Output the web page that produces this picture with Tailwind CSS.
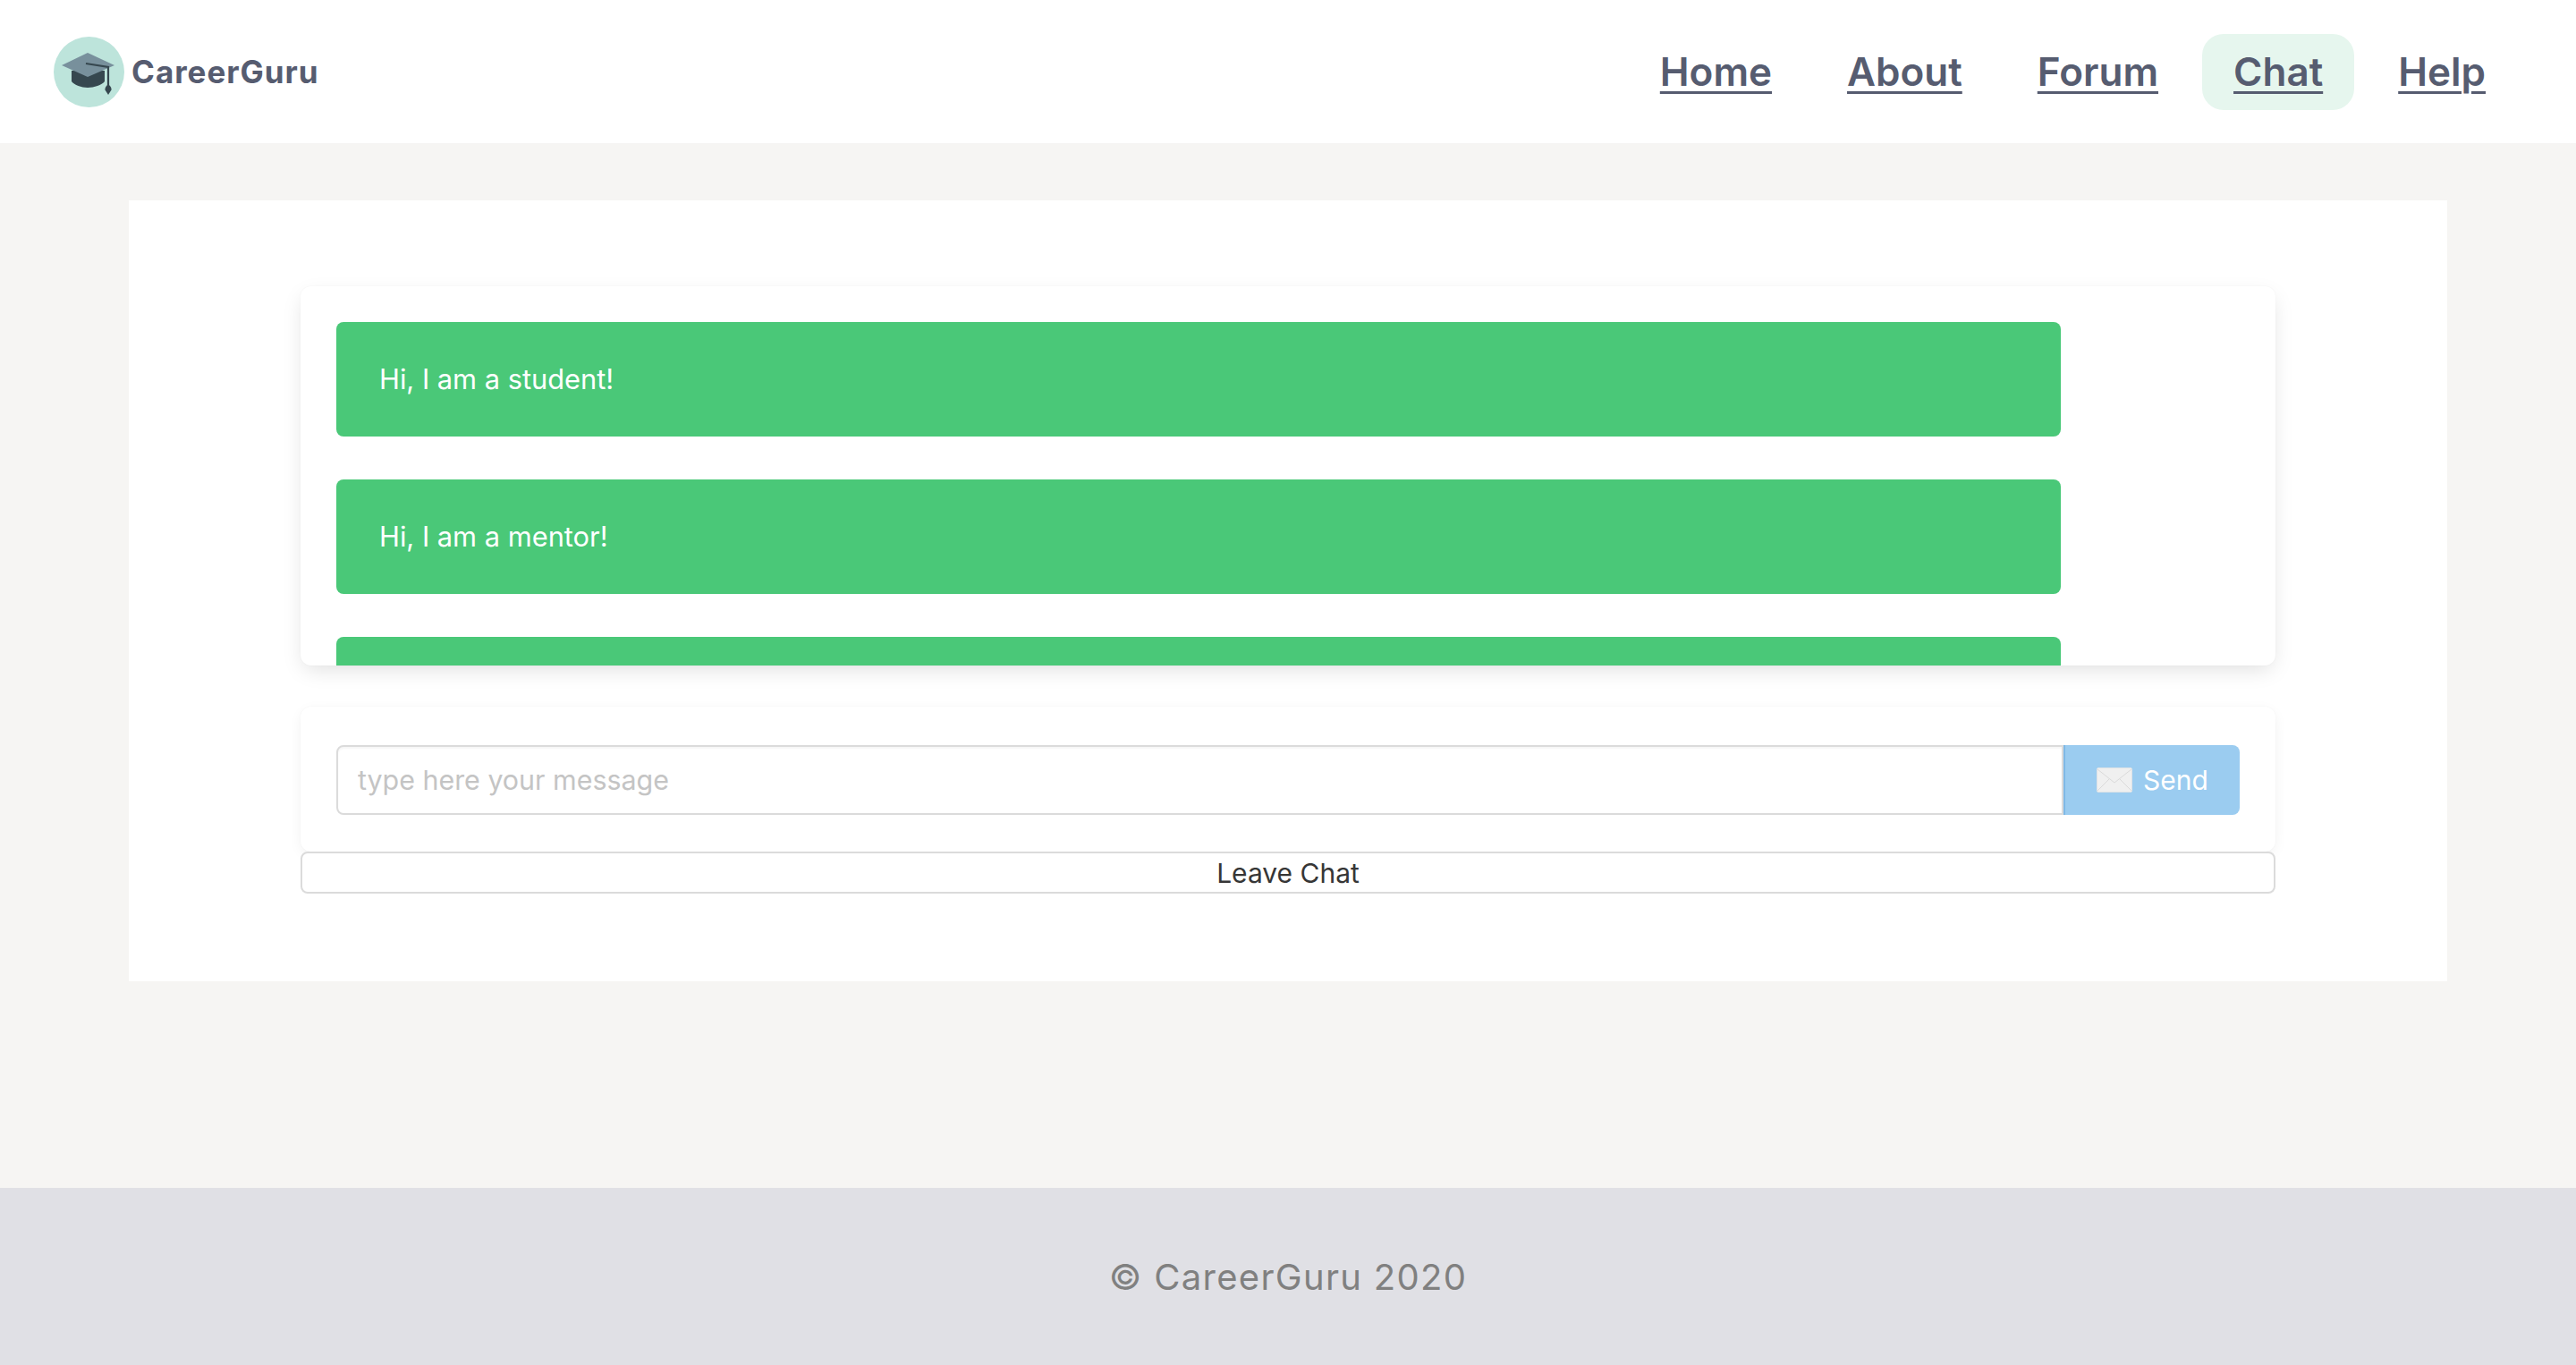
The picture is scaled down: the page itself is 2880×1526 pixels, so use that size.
<!DOCTYPE html>
<html>
  <head>
    <meta charset="utf-8" />
    <title>CareerGuru | Chat</title>
    <script src="https://cdn.jsdelivr.net/npm/@tailwindcss/browser@4"></script>
  </head>

  <body class="h-[1526px] flex flex-col bg-[#f6f5f3] font-['Inter',sans-serif]">
    <header class="h-[160px] bg-white flex items-center justify-between pl-[60px] pr-[66px]">
      <a href="#" class="flex items-center gap-[8px]">
        <svg class="w-[79px] h-[79px]" viewBox="0 0 79 79">
          <circle cx="39.5" cy="39.5" r="39.5" fill="#bde4db" />
          <path d="M20 38v12c3 4 11 7 18 7s16-3 19-7V38z" fill="#36474f" />
          <path d="M9 32l29-14 30 14-30 13z" fill="#78909c" />
          <path d="M36 30l25 4v20" fill="none" stroke="#36474f" stroke-width="2.2" />
          <path d="M61 53c2 2 4 4 3.500 6.500L61 65l-3.500-5.500C57 57 59 55 61 53z" fill="#36474f" />
        </svg>
        <span class="text-[35px] tracking-[1px] font-bold text-[#565c70] pt-[1px]">CareerGuru</span>
      </a>
      <nav class="flex items-center gap-[14px] text-[44px] leading-[53px] font-semibold text-[#565c70]">
        <a href="#" class="px-[35px] py-[16px] underline decoration-[3px] underline-offset-[6px]">Home</a>
        <a href="#" class="px-[35px] py-[16px] underline decoration-[3px] underline-offset-[6px]">About</a>
        <a href="#" class="px-[35px] py-[16px] underline decoration-[3px] underline-offset-[6px]">Forum</a>
        <a href="#" class="px-[35px] py-[16px] rounded-[24px] bg-[#e6f6ee] underline decoration-[3px] underline-offset-[6px]">Chat</a>
        <a href="#" class="px-[35px] py-[16px] underline decoration-[3px] underline-offset-[6px]">Help</a>
      </nav>
    </header>

    <main class="flex-1 px-[144px] pt-[64px]">
      <div class="h-[873px] bg-white px-[192px] pt-[96px]">
        <div class="h-[424px] overflow-hidden bg-white rounded-[12px] pl-[40px] pr-[240px] pt-[40px] flex flex-col gap-[48px] shadow-[0_8px_24px_-4px_rgba(0,0,0,0.13),0_0_2px_rgba(0,0,0,0.04)]">
          <div class="shrink-0 h-[128px] flex items-center px-[48px] rounded-[8px] bg-[#4ac878] text-white text-[30.800px]">Hi, I am a student!</div>
          <div class="shrink-0 h-[128px] flex items-center px-[48px] rounded-[8px] bg-[#4ac878] text-white text-[30.800px]">Hi, I am a mentor!</div>
          <div class="shrink-0 h-[128px] rounded-[8px] bg-[#4ac878]"></div>
        </div>

        <form class="mt-[46px] h-[162px] bg-white rounded-[12px] px-[40px] pt-[43px] flex items-start shadow-[0_4px_16px_-2px_rgba(0,0,0,0.07),0_0_2px_rgba(0,0,0,0.04)]">
          <input
            class="flex-1 h-[78px] px-[22px] border-2 border-[#dbdbdb] rounded-l-[8px] text-[30.400px] outline-none placeholder:text-[#c4c4c4] shadow-[inset_0_2px_2px_rgba(10,10,10,0.04)]"
            placeholder="type here your message"
          />
          <button type="button" class="w-[197px] h-[78px] flex items-center justify-center gap-[12px] bg-[#9bccf0] border-l-2 border-[#7fb9e6] rounded-r-[8px] text-white text-[30px]">
            <svg class="w-[40px] h-[28px]" viewBox="0 0 40 28">
              <rect x="0.500" y="0.500" width="39" height="27" rx="1.500" fill="#f0f0f0" stroke="#dfe3e6" />
              <path d="M1 2l19 15L39 2M1 26l13-13M39 26L26 13" fill="none" stroke="#dadada" stroke-width="1" />
            </svg>
            Send
          </button>
        </form>

        <button type="button" class="relative w-full h-[47px] bg-white border-2 border-[#dbdbdb] rounded-[8px] text-[30px] text-[#363636] leading-none">Leave Chat</button>
      </div>
    </main>

    <footer class="h-[198px] pt-[2px] bg-[#e0e0e5] flex items-center justify-center text-[40px] tracking-[1.300px] text-[#808080]">© CareerGuru 2020</footer>
  </body>
</html>
